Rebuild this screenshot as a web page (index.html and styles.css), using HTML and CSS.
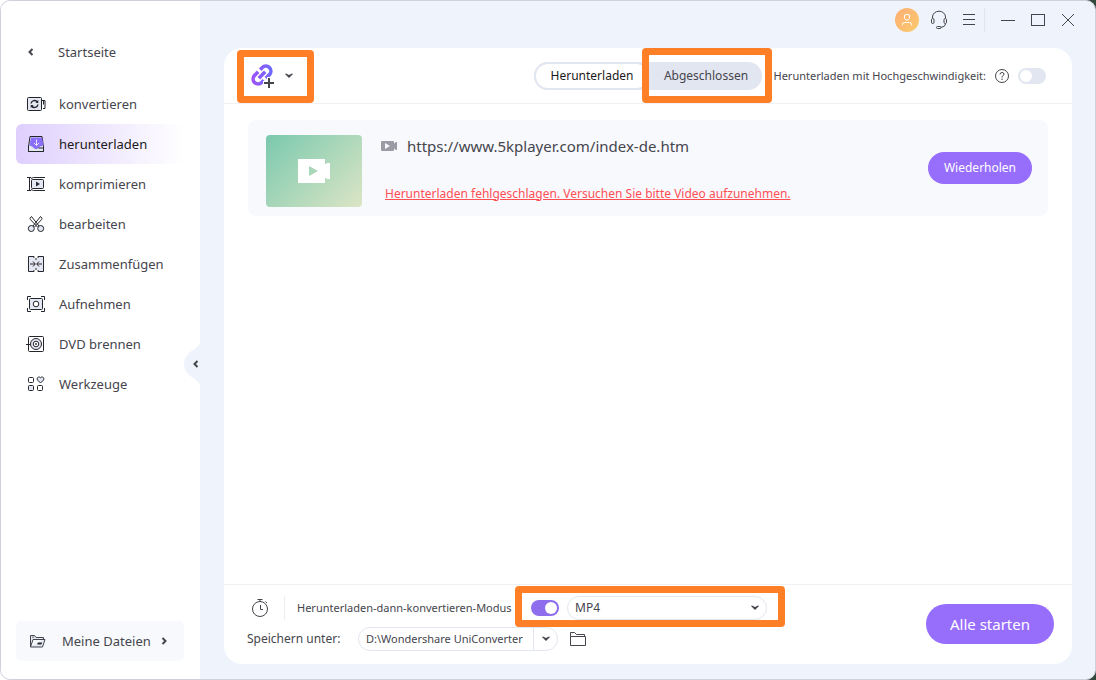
FILE: index.html
```html
<!DOCTYPE html>
<html lang="de">
<head>
<meta charset="utf-8">
<meta name="viewport" content="width=device-width, initial-scale=1">
<title>UniConverter</title>
<link rel="stylesheet" href="styles.css">
</head>
<body>
<div class="window">
  <aside class="sidebar">
    <a class="home" href="#">
      <svg width="6" height="8" viewBox="0 0 6 8"><path d="M4.5 1 1.5 4l3 3" class="chev"/></svg>
      Startseite
    </a>
    <nav class="nav">
      <a class="nav-item" href="#">
        <svg class="icon" viewBox="0 0 20 20"><rect x="1.500" y="3.500" width="14" height="13" rx="1" class="soft"/><path d="M16 6.500h3v8h-2M17.500 6.500v4"/><path d="M5 9.500a3.600 3.600 0 0 1 6.500-1.500M12 10.500A3.600 3.600 0 0 1 5.500 12" stroke-width="1.400"/><path d="M12.300 6v3H9.500zM4.700 14v-3h3z" class="solid"/></svg>
        konvertieren
      </a>
      <a class="nav-item active" href="#" aria-current="page">
        <svg class="icon" viewBox="0 0 20 20"><path d="M4 2.500h12l1.500 10.500v4.500h-15V13z" class="soft"/><path d="M5 3.500h11l1.500 8-3.500 1-3 2.500h-2L6 12.500l-2.500-1z" fill="#8a6efa" stroke="none"/><path d="M2.500 11.500v6h15v-3.500h-5"/><path d="M10.500 5.500v6M8 9l2.500 2.500L13 9" stroke="#e8e2ff"/></svg>
        herunterladen
      </a>
      <a class="nav-item" href="#">
        <svg class="icon" viewBox="0 0 20 20"><path d="M3.500 3v14M1 3.500h4M1 16.500h4M5 4.500 7.500 3.500H19M5 15.500l2.500 1H19"/><rect x="5.500" y="5.500" width="12" height="9" rx="1" class="soft"/><path d="m10 7.500 4 2.500-4 2.500z" class="solid"/></svg>
        komprimieren
      </a>
      <a class="nav-item" href="#">
        <svg class="icon" viewBox="0 0 20 20"><circle cx="5.300" cy="14.500" r="3" class="soft"/><circle cx="14.700" cy="14.500" r="3" class="soft"/><path d="m7 12 7.500-9.500 1.300 1.500c.3.500.2 1-.2 1.600L8.500 13M13 12 5.500 2.500 4.200 4c-.3.500-.2 1 .2 1.600l7.100 7.400"/></svg>
        bearbeiten
      </a>
      <a class="nav-item" href="#">
        <svg class="icon" viewBox="0 0 20 20"><path d="M8 2.500H2.500v15H8v-2h4v2h5.500v-15H12v2H8z" fill="#e4e8f2" stroke="none"/><path d="M8 4V2.500H2.500v15H8V16M12 4V2.500h5.500v15H12V16M10 4v2M10 14v2"/><path d="M4 10h5M7 7.500 9.300 10 7 12.500M16 10h-5M13 7.500 10.700 10l2.300 2.500"/></svg>
        Zusammenfügen
      </a>
      <a class="nav-item" href="#">
        <svg class="icon" viewBox="0 0 20 20"><path d="M1.500 6V2.500H5M15 2.500h3.500V6M1.500 14v3.500H5M15 17.500h3.500V14"/><rect x="3.500" y="4.500" width="13" height="11" rx="1" class="soft"/><circle cx="10" cy="10" r="2.800" fill="#fff"/></svg>
        Aufnehmen
      </a>
      <a class="nav-item" href="#">
        <svg class="icon" viewBox="0 0 20 20"><rect x="2.500" y="2.500" width="15" height="15" rx="1"/><path d="M0 10.500h4"/><circle cx="10" cy="10" r="5.500" class="soft"/><circle cx="10" cy="10" r="2.800" fill="#fff"/><circle cx="10" cy="10" r=".600"/></svg>
        DVD brennen
      </a>
      <a class="nav-item" href="#">
        <svg class="icon" viewBox="0 0 20 20"><rect x="2.500" y="3.500" width="5" height="5" rx="1"/><rect x="2.500" y="11.500" width="5" height="5" rx="1" class="soft"/><rect x="11.500" y="11.500" width="5" height="5" rx="1"/><path d="m14.500 9-3-3c-1.300-2.500 1.500-4 3-2.200 1.500-1.800 4.300-.3 3 2.200z" class="soft"/></svg>
        Werkzeuge
      </a>
    </nav>
    <a class="files" href="#">
      <svg class="files-icon" viewBox="0 0 18 16"><path d="M1.500 14V2.500h4l1.500 2h7.500v2M1.500 14h12l2.500-7.500H4z" fill="#e4e8f2"/><path d="M4 5V3.500M8.500 10.500h4" /><path d="M9 9.500h4l-.7 2H8.500z" class="solid"/></svg>
      Meine Dateien
      <svg class="files-chev" viewBox="0 0 6 8"><path d="m1.500 1 3 3-3 3" class="chev"/></svg>
    </a>
    <button class="collapse" type="button" aria-label="Seitenleiste einklappen">
      <svg width="16" height="44" viewBox="0 0 16 44"><path d="M16 0C15 6 10 6 4 12Q0 17 0 22t4 10c6 6 11 6 12 12z" fill="#eff3fb" stroke="none"/><path d="m13.500 19-3 3 3 3" class="chev"/></svg>
    </button>
  </aside>

  <main class="main">
    <header class="titlebar">
      <button class="avatar" type="button" aria-label="Konto">
        <svg width="24" height="24" viewBox="0 0 24 24"><defs><linearGradient id="sun" x2="1" y2="1"><stop stop-color="#ffae76"/><stop offset="1" stop-color="#facb6c"/></linearGradient></defs><circle cx="12" cy="12" r="12" fill="url(#sun)" stroke="none"/><path d="M9.500 7q2.500-1 5 0v3.500L13 12h-2l-1.500-1.500zM7.500 17.500v-1q0-2 2-2h5q2 0 2 2v1" stroke="#fff"/></svg>
      </button>
      <button class="title-btn" type="button" aria-label="Support">
        <svg width="18" height="20" viewBox="0 0 18 20"><path d="M2.500 8V7a6.500 5.800 0 0 1 13 0v1M15.500 14q0 2.500-4.500 3.500"/><rect x="1.500" y="8.500" width="2.500" height="5" rx="1.200"/><rect x="14" y="8.500" width="2.500" height="5" rx="1.200"/><rect x="6.500" y="16.500" width="4.500" height="2" rx="1"/></svg>
      </button>
      <button class="title-btn" type="button" aria-label="Menü">
        <svg width="12" height="12" viewBox="0 0 12 12"><path d="M0 .5h12M0 5.500h12M0 10.500h12"/></svg>
      </button>
      <span class="title-sep"></span>
      <button class="title-btn" type="button" aria-label="Minimieren">
        <svg width="14" height="14" viewBox="0 0 14 14"><path d="M0 7.500h14"/></svg>
      </button>
      <button class="title-btn" type="button" aria-label="Maximieren">
        <svg width="14" height="14" viewBox="0 0 14 14"><rect x=".5" y="1.500" width="13" height="11"/></svg>
      </button>
      <button class="title-btn" type="button" aria-label="Schließen">
        <svg width="12" height="12" viewBox="0 0 12 12"><path d="m0 0 12 12M12 0 0 12"/></svg>
      </button>
    </header>

    <section class="panel">
      <div class="toolbar">
        <button class="add-link" type="button" aria-label="Link hinzufügen">
          <svg width="26" height="26" viewBox="0 0 26 26"><defs><linearGradient id="violet" gradientUnits="userSpaceOnUse" x1="-8" y1="-8" x2="8" y2="8"><stop stop-color="#a052fb"/><stop offset="1" stop-color="#6a6cff"/></linearGradient></defs><g transform="translate(12 12) rotate(-45)" fill="none" stroke="url(#violet)" stroke-width="3.600"><path d="M-.5-5H-5.500a5 5 0 0 0 0 10H-2.500M.5 5H5.500a5 5 0 0 0 0-10H2.500"/><path d="M-4.500 0h9" /></g><path d="M19 14v12M13 20h12" stroke="#fff" stroke-width="4"/><path d="M19 15v10M14 20h10" stroke="#45454d" stroke-width="2"/></svg>
          <svg width="8" height="6" viewBox="0 0 8 6"><path d="m0 1 1-.500 3 1.500 3-1.500 1 .500-4 4z" class="arrow"/></svg>
          <span class="mark mark-link"></span>
        </button>
        <div class="tabs">
          <button class="tab current" type="button">Herunterladen</button>
          <button class="tab" type="button">Abgeschlossen</button>
          <span class="mark mark-tab"></span>
        </div>
        <label class="speed-label" for="speed">Herunterladen mit Hochgeschwindigkeit:</label>
        <button class="help" type="button" aria-label="Hilfe">
          <svg width="14" height="14" viewBox="0 0 14 14"><circle cx="7" cy="7" r="6.500"/><path d="M5 5.500q0-2 2-2t2 1.700q0 1-1 1.500T7 8v.5M7 9.500V11"/></svg>
        </button>
        <input class="switch" id="speed" type="checkbox">
      </div>

      <div class="list">
        <article class="task">
          <div class="thumb">
            <svg width="32" height="24" viewBox="0 0 32 24"><path fill="#fff" stroke="none" fill-rule="evenodd" d="M0 0h27v5h1l1-1h3v16h-3l-1-1h-1v5H0zM11 7v10l9-5z"/></svg>
          </div>
          <div class="task-info">
            <div class="task-title">
              <svg width="16" height="10" viewBox="0 0 16 10"><path fill="#9b9ba5" stroke="none" fill-rule="evenodd" d="M1 0h11q1 0 1 1v1.500L15 1h1v8h-1l-2-1.500V9q0 1-1 1H1Q0 10 0 9V1q0-1 1-1zM4 2v6l5-3z"/></svg>
              <span>https://www.5kplayer.com/index-de.htm</span>
            </div>
            <a class="task-error" href="#">Herunterladen fehlgeschlagen. Versuchen Sie bitte Video aufzunehmen.</a>
          </div>
          <button class="primary retry" type="button">Wiederholen</button>
        </article>
      </div>

      <footer class="footer">
        <div class="options">
          <div class="option-row">
            <button class="timer" type="button" aria-label="Zeitplan">
              <svg width="18" height="20" viewBox="0 0 18 20"><circle cx="9" cy="11" r="7.500"/><path d="M6.500 1.500h5M9 1.500v2M14.500 3.500l1.500 1.500M9.500 7v4.500H12"/></svg>
            </button>
            <span class="option-sep"></span>
            <label class="mode-label" for="mode">Herunterladen-dann-konvertieren-Modus</label>
            <div class="mode-controls">
              <input class="switch" id="mode" type="checkbox" checked>
              <span class="format">
                <select aria-label="Format"><option>MP4</option></select>
                <svg width="8" height="6" viewBox="0 0 8 6"><path d="m0 1 1-.500 3 1.500 3-1.500 1 .500-4 4z" class="arrow"/></svg>
              </span>
              <span class="mark mark-mode"></span>
            </div>
          </div>
          <div class="option-row">
            <label class="path-label" for="path">Speichern unter:</label>
            <div class="path">
              <input id="path" type="text" value="D:\Wondershare UniConverter">
              <button type="button" aria-label="Ordner wählen">
                <svg width="8" height="6" viewBox="0 0 8 6"><path d="m0 1 1-.500 3 1.500 3-1.500 1 .500-4 4z" class="arrow"/></svg>
              </button>
            </div>
            <button class="open" type="button" aria-label="Ordner öffnen">
              <svg width="16" height="14" viewBox="0 0 16 14"><path d="M.5 4.500h15v9H.5zM.5 4.500v-4h4l2 2h8v2"/></svg>
            </button>
          </div>
        </div>
        <button class="primary start" type="button">Alle starten</button>
      </footer>
    </section>
  </main>
</div>
</body>
</html>
```
FILE: styles.css
```css
* { box-sizing: border-box; }

body {
  margin: 0;
  background: linear-gradient(90deg, #fff 50%, #33473f 50%);
  color: #45454d;
  font: 12px/16px "Noto Sans", "Open Sans", sans-serif;
}

button {
  padding: 0;
  border: 0;
  background: none;
  color: inherit;
  font: inherit;
}

a { color: inherit; text-decoration: none; }

svg {
  display: block;
  flex: none;
  fill: none;
  stroke: #45454d;
}

.soft { fill: #e4e8f2; }
.solid { fill: #2b2b33; stroke: none; }
.chev { fill: none; stroke: #45454d; stroke-width: 2; }
.arrow { fill: #45454d; stroke: none; }

.window {
  display: flex;
  min-height: 100vh;
  border: 1px solid #d0d0dc;
  border-radius: 10px;
  background: #eff3fb;
  overflow: hidden;
}

/* Sidebar */
.sidebar {
  position: relative;
  display: flex;
  flex-direction: column;
  flex: none;
  width: 199px;
  padding: 31px 16px 18px 15px;
  background: #fff;
  font-size: 13px;
  line-height: 20px;
}

.home {
  display: flex;
  align-items: center;
  gap: 24px;
  height: 40px;
  padding-left: 12px;
}

.nav {
  display: flex;
  flex-direction: column;
  margin-top: 12px;
}

.nav-item {
  display: flex;
  align-items: center;
  gap: 13px;
  height: 40px;
  padding-left: 10px;
  border-radius: 6px;
}

.icon { width: 20px; height: 20px; stroke: #24242c; }

.active {
  background: linear-gradient(90deg, #decffd, #fff);
  color: #1a1a20;
}

.files {
  display: flex;
  align-items: center;
  height: 40px;
  margin-top: auto;
  padding-left: 13px;
  border-radius: 6px;
  background: #f8f9fd;
}

.files-icon { width: 18px; height: 16px; margin-right: 15px; }
.files-chev { width: 6px; height: 8px; margin-left: 10px; }

.collapse {
  position: absolute;
  top: 341px;
  right: 0;
}

/* Title bar */
.main {
  display: flex;
  flex: 1;
  flex-direction: column;
  min-width: 0;
  padding: 0 23px 15px 24px;
}

.titlebar {
  display: flex;
  align-items: center;
  justify-content: flex-end;
  height: 47px;
  margin-right: -11px;
  padding-bottom: 10px;
}

.title-btn {
  display: grid;
  place-items: center;
  width: 30px;
  height: 30px;
}

.avatar { margin-right: 5px; }

.title-sep {
  width: 1px;
  height: 24px;
  margin-right: 8px;
  background: #e2e5f0;
}

/* Panel */
.panel {
  display: flex;
  flex: 1;
  flex-direction: column;
  border-radius: 18px;
  background: #fff;
}

.toolbar {
  display: flex;
  align-items: center;
  height: 56px;
  padding: 0 26px;
  border-bottom: 1px solid #f0f1f5;
}

.add-link {
  position: relative;
  display: flex;
  align-items: center;
  gap: 9px;
}

.tabs {
  position: relative;
  display: flex;
  width: 228px;
  height: 28px;
  margin-left: auto;
  border-radius: 14px;
  background: #e2e6f0;
}

.tab { flex: 1; }

.current {
  border: 2px solid #e2e6f0;
  border-radius: 14px;
  background: #fff;
  color: #1a1a20;
}

.speed-label {
  width: 220px;
  margin-left: 4px;
  font-size: 11px;
  text-align: right;
  white-space: nowrap;
}

.help { margin: 0 9px; }

.switch {
  appearance: none;
  flex: none;
  width: 28px;
  height: 16px;
  margin: 0;
  padding: 2px;
  border-radius: 8px;
  background: #e2e6f0;
}

.switch::before {
  content: "";
  display: block;
  width: 12px;
  height: 12px;
  border-radius: 50%;
  background: #fff;
}

.switch:checked { background: #8e6eed; }
.switch:checked::before { margin-left: auto; }

/* Highlight frames drawn over the controls */
.mark {
  position: absolute;
  border: 7px solid #ff7f27;
  border-radius: 4px;
  pointer-events: none;
}

.mark-link { inset: -13px -21px -14px -13px; }
.mark-tab { inset: -14px -10px -13px 108px; }
.mark-mode { inset: -10px -18px -7px -16px; }

/* Download list */
.list { flex: 1; padding: 16px 24px; }

.task {
  display: flex;
  align-items: center;
  height: 96px;
  padding: 0 16px 0 18px;
  border-radius: 8px;
  background: #f8f9fd;
}

.thumb {
  display: grid;
  place-items: center;
  width: 96px;
  height: 72px;
  margin-top: 6px;
  border-radius: 4px;
  background: linear-gradient(135deg, #7ac9ae, #dce5c5);
}

.task-info {
  display: flex;
  flex: 1;
  flex-direction: column;
  align-items: flex-start;
  gap: 29px;
  padding-left: 19px;
}

.task-title {
  display: flex;
  align-items: center;
  gap: 10px;
  font-size: 15px;
  line-height: 22px;
}

.task-error {
  margin-left: 4px;
  color: #ff4f55;
  text-decoration: underline;
}

.primary { background: #976efc; color: #fff; }
.retry { width: 104px; height: 32px; border-radius: 16px; }
.start { width: 128px; height: 40px; border-radius: 20px; font-size: 15px; }

/* Footer */
.footer {
  display: flex;
  align-items: center;
  justify-content: space-between;
  height: 80px;
  padding: 0 18px 2px 23px;
  border-top: 1px solid #f0f1f5;
}

.options { display: grid; gap: 7px; }
.option-row { display: flex; align-items: center; height: 24px; }
.timer { margin-left: 4px; }

.option-sep {
  width: 1px;
  height: 24px;
  margin: 0 12px 0 15px;
  background: #eceef4;
}

.mode-label { width: 234px; font-size: 11px; white-space: nowrap; }

.mode-controls {
  position: relative;
  display: flex;
  align-items: center;
  gap: 8px;
}

.format { position: relative; }

.format select {
  appearance: none;
  display: block;
  width: 200px;
  height: 24px;
  padding: 0 24px 0 7px;
  border: 1px solid #e2e6f0;
  border-radius: 12px;
  background: #fff;
  color: inherit;
  font: inherit;
}

.format svg { position: absolute; top: 9px; right: 8px; pointer-events: none; }

.path-label { width: 111px; }

.path {
  display: flex;
  width: 200px;
  height: 24px;
  border: 1px solid #e2e6f0;
  border-radius: 12px;
  overflow: hidden;
}

.path input {
  flex: 1;
  min-width: 0;
  padding: 0 0 0 7px;
  border: 0;
  background: none;
  color: inherit;
  font: inherit;
  font-size: 11px;
}

.path button {
  display: grid;
  place-items: center;
  width: 24px;
  border-left: 1px solid #e2e6f0;
}

.open { margin-left: 12px; }
```
